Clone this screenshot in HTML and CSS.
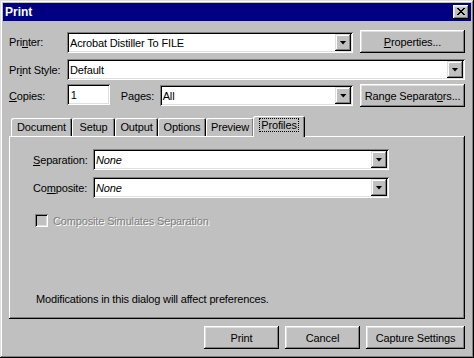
FILE: index.html
```html
<!DOCTYPE html>
<html lang="en">
<head>
  <meta charset="UTF-8">
  <title>Print</title>
  <link rel="stylesheet" href="styles.css">
</head>
<body>
  <div class="window">
    <div class="titlebar">
      <span class="title">Print</span>
      <button class="close" aria-label="Close">
        <svg width="8" height="7" viewBox="0 0 8 7" shape-rendering="crispEdges">
          <path d="M0 0h2v1h-2z M6 0h2v1h-2z M1 1h2v1h-2z M5 1h2v1h-2z M2 2h4v1h-4z M3 3h2v1h-2z M2 4h4v1h-4z M1 5h2v1h-2z M5 5h2v1h-2z M0 6h2v1h-2z M6 6h2v1h-2z" fill="#000"/>
        </svg>
      </button>
    </div>

    <div class="content">
      <div class="row row-printer">
        <label class="lbl">Pri<u>n</u>ter:</label>
        <div class="combo combo-printer"><span class="combo-text">Acrobat Distiller To FILE</span><span class="drop"></span></div>
        <button class="btn btn-wide"><u>P</u>roperties...</button>
      </div>

      <div class="row row-style">
        <label class="lbl">Pr<u>i</u>nt Style:</label>
        <div class="combo combo-style"><span class="combo-text">Default</span><span class="drop"></span></div>
      </div>

      <div class="row row-copies">
        <label class="lbl"><u>C</u>opies:</label>
        <div class="field field-copies">1</div>
        <label class="lbl lbl-pages">Pa<u>g</u>es:</label>
        <div class="combo combo-pages"><span class="combo-text">All</span><span class="drop"></span></div>
        <button class="btn btn-wide">Range Separat<u>o</u>rs...</button>
      </div>

      <div class="tabs">
        <div class="tab tab-document">Document</div>
        <div class="tab tab-setup">Setup</div>
        <div class="tab tab-output">Output</div>
        <div class="tab tab-options">Options</div>
        <div class="tab tab-preview">Preview</div>
        <div class="tab tab-profiles active"><span class="focus">Profiles</span></div>
      </div>

      <div class="panel">
        <div class="prow">
          <label class="plbl"><u>S</u>eparation:</label>
          <div class="combo combo-profile"><span class="combo-text italic">None</span><span class="drop"></span></div>
        </div>
        <div class="prow prow-composite">
          <label class="plbl">Co<u>m</u>posite:</label>
          <div class="combo combo-profile"><span class="combo-text italic">None</span><span class="drop"></span></div>
        </div>
        <div class="check-row">
          <span class="checkbox"></span>
          <span class="disabled">Composite Simulates Separation</span>
        </div>
        <p class="note">Modifications in this dialog will affect preferences.</p>
      </div>

      <div class="actions">
        <button class="btn btn-print">Print</button>
        <button class="btn btn-cancel">Cancel</button>
        <button class="btn btn-capture">Capture Settings</button>
      </div>
    </div>
  </div>
</body>
</html>
```

FILE: styles.css
```css
body {
  margin: 0;
  background: #c0c0c0;
  font-family: "Liberation Sans", Arial, sans-serif;
  font-size: 11px;
  letter-spacing: -0.15px;
  color: #000;
}
.window {
  width: 474px;
  height: 358px;
  box-sizing: border-box;
  padding: 3px;
  background: #c0c0c0;
  box-shadow: inset -1px -1px #000, inset 1px 1px #dfdfdf, inset -2px -2px #808080, inset 2px 2px #fff;
  display: flex;
  flex-direction: column;
}
.titlebar {
  height: 18px;
  background: #000080;
  color: #fff;
  display: flex;
  align-items: center;
  justify-content: space-between;
  padding: 0 2px;
}
.title {
  font-weight: bold;
  font-size: 12px;
  letter-spacing: 0;
}
.close {
  width: 16px;
  height: 14px;
  padding: 0;
  border: 0;
  background: #c0c0c0;
  box-shadow: inset -1px -1px #000, inset 1px 1px #fff, inset -2px -2px #808080, inset 2px 2px #dfdfdf;
  display: flex;
  align-items: center;
  justify-content: center;
}
.close svg {
  display: block;
  margin: 0 1px 1px 0;
}
.content {
  flex: 1;
  display: flex;
  flex-direction: column;
  padding: 0 6px;
}
.row {
  display: flex;
  align-items: flex-end;
}
.row-printer {
  margin-top: 9px;
  height: 23px;
}
.row-style {
  margin-top: 6px;
}
.row-copies {
  margin-top: 4px;
  align-items: flex-start;
}
.lbl {
  width: 58px;
  align-self: center;
}
.lbl-pages {
  width: 39px;
  margin-left: 11px;
}
.combo, .field {
  height: 21px;
  box-sizing: border-box;
  background: #fff;
  box-shadow: inset 1px 1px #808080, inset -1px -1px #fff, inset 2px 2px #000, inset -2px -2px #dfdfdf;
  display: flex;
  align-items: center;
  padding: 2px;
}
.combo-text {
  flex: 1;
  padding-left: 1px;
  white-space: nowrap;
}
.italic {
  font-style: italic;
}
.drop {
  width: 16px;
  height: 17px;
  background: #c0c0c0;
  box-shadow: inset -1px -1px #000, inset 1px 1px #dfdfdf, inset -2px -2px #808080, inset 2px 2px #fff;
  display: flex;
  align-items: center;
  justify-content: center;
}
.drop::after {
  content: "";
  width: 7px;
  height: 4px;
  background: #000;
  clip-path: polygon(0 0, 100% 0, 50% 100%);
}
.combo-printer {
  width: 286px;
  margin-right: 7px;
}
.combo-style {
  width: 398px;
}
.field-copies {
  width: 43px;
  padding-left: 4px;
}
.combo-pages {
  width: 194px;
  margin-top: 1px;
  margin-right: 7px;
}
.btn {
  height: 23px;
  box-sizing: border-box;
  padding: 0;
  border: 0;
  background: #c0c0c0;
  font: inherit;
  letter-spacing: inherit;
  color: #000;
  box-shadow: inset -1px -1px #000, inset 1px 1px #fff, inset -2px -2px #808080, inset 2px 2px #dfdfdf;
}
.btn-wide {
  width: 105px;
}

/* tab strip */
.tabs {
  display: flex;
  align-items: flex-end;
  height: 20px;
  margin-top: 9px;
  padding-left: 2px;
  position: relative;
  z-index: 1;
}
.tab {
  height: 18px;
  box-sizing: border-box;
  padding-top: 3px;
  text-align: center;
  background: #c0c0c0;
  border-radius: 2px 2px 0 0;
  box-shadow: inset 1px 1px #fff, inset -1px 0 #000, inset -2px 0 #808080;
}
.tab-document { width: 61px; }
.tab-setup { width: 43px; }
.tab-output { width: 43px; }
.tab-options { width: 48px; }
.tab-preview { width: 48px; }
.tab.active {
  width: 52px;
  height: 21px;
  margin: 0 -2px -1px -1px;
  padding-top: 3px;
}
.focus {
  outline: 1px dotted #000;
  padding: 0 1px;
}
.panel {
  height: 183px;
  box-sizing: border-box;
  padding: 13px 0 13px 24px;
  background: #c0c0c0;
  box-shadow: inset -1px -1px #000, inset 1px 1px #fff, inset -2px -2px #808080;
  display: flex;
  flex-direction: column;
}
.prow {
  display: flex;
  align-items: center;
}
.prow-composite {
  margin-top: 7px;
}
.plbl {
  width: 60px;
}
.combo-profile {
  width: 296px;
}
.check-row {
  display: flex;
  align-items: center;
  margin-top: 16px;
  margin-left: 2px;
}
.checkbox {
  width: 13px;
  height: 13px;
  box-sizing: border-box;
  background: #c0c0c0;
  box-shadow: inset 1px 1px #808080, inset -1px -1px #fff, inset 2px 2px #000, inset -2px -2px #dfdfdf;
  margin-right: 5px;
}
.disabled {
  color: #808080;
  text-shadow: 1px 1px #fff;
}
.note {
  margin: auto 0 0 3px;
  line-height: 13px;
}
.actions {
  display: flex;
  justify-content: flex-end;
  gap: 6px;
  margin-top: 7px;
}
.btn-print, .btn-cancel {
  width: 75px;
}
.btn-capture {
  width: 99px;
}
```
